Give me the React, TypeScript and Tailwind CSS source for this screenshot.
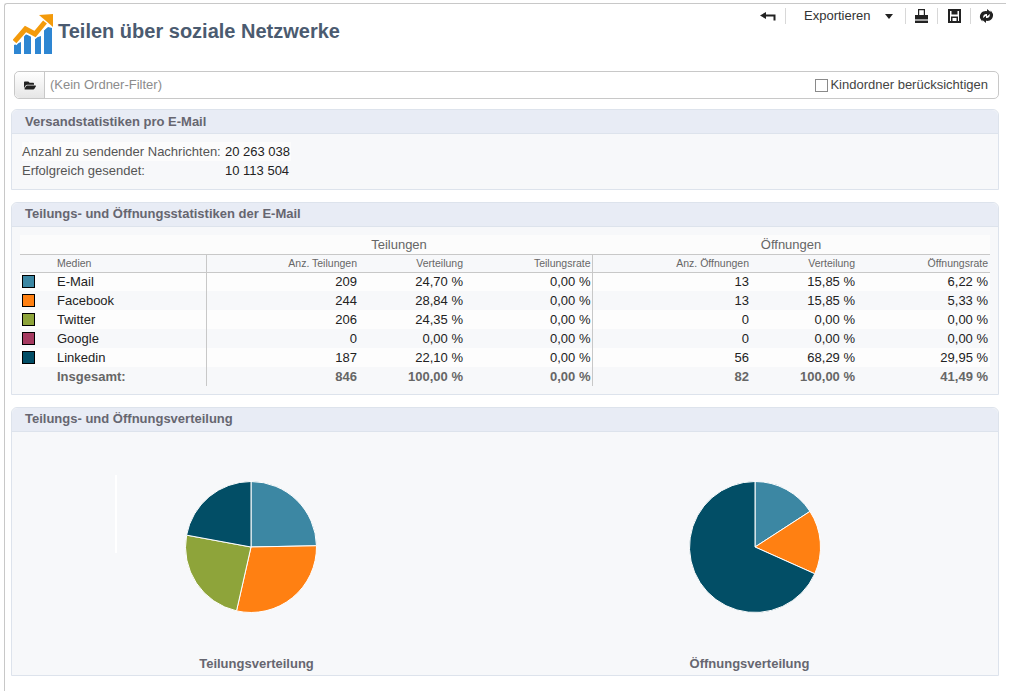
import React from 'react';
import { FaFolderOpen } from 'react-icons/fa';

const rows = [
  { name: 'E-Mail', color: 'bg-[#3c87a3]', v: ['209', '24,70 %', '0,00 %', '13', '15,85 %', '6,22 %'] },
  { name: 'Facebook', color: 'bg-[#ff8012]', v: ['244', '28,84 %', '0,00 %', '13', '15,85 %', '5,33 %'] },
  { name: 'Twitter', color: 'bg-[#8ea43a]', v: ['206', '24,35 %', '0,00 %', '0', '0,00 %', '0,00 %'] },
  { name: 'Google', color: 'bg-[#a53a60]', v: ['0', '0,00 %', '0,00 %', '0', '0,00 %', '0,00 %'] },
  { name: 'Linkedin', color: 'bg-[#024e66]', v: ['187', '22,10 %', '0,00 %', '56', '68,29 %', '29,95 %'] },
];
const total = ['846', '100,00 %', '0,00 %', '82', '100,00 %', '41,49 %'];
const heads = ['Anz. Teilungen', 'Verteilung', 'Teilungsrate', 'Anz. Öffnungen', 'Verteilung', 'Öffnungsrate'];

// cell padding per value column, the 3rd one carries the divider
const cellCls = ['pr-px', 'pr-px', 'pr-px border-r border-[#c8c8c8]', 'pr-px', 'pr-px', 'pr-[2px]'];

function Panel({ title, children, className, titleCls = '' }: { title: string; children: React.ReactNode; className: string; titleCls?: string }) {
  return (
    <section className={`ml-[6px] w-[988px] border border-[#dde3ec] rounded-t-[6px] bg-[#f7f8fa] ${className}`}>
      <h2 className={`h-[24px] pl-[13px] flex items-center bg-[#e8ecf5] border-b border-[#dde3ec] rounded-t-[6px] text-[13px] font-bold text-[#666670] ${titleCls}`}>
        {title}
      </h2>
      {children}
    </section>
  );
}

function Pie({ values }: { values: [number, string][] }) {
  const total = values.reduce((s, v) => s + v[0], 0);
  let a = 0;
  return (
    <svg width="134" height="134" viewBox="-67 -67 134 134">
      {values.map(([val, fill], i) => {
        const start = a;
        a += (val / total) * Math.PI * 2;
        const x1 = 65.5 * Math.sin(start);
        const y1 = -65.5 * Math.cos(start);
        const x2 = 65.5 * Math.sin(a);
        const y2 = -65.5 * Math.cos(a);
        const large = a - start > Math.PI ? 1 : 0;
        return (
          <path
            key={i}
            d={`M0 0L${x1} ${y1}A65.5 65.5 0 ${large} 1 ${x2} ${y2}Z`}
            fill={fill}
            stroke="#ffffff"
            strokeWidth="1"
          />
        );
      })}
    </svg>
  );
}

function Logo() {
  return (
    <svg width="40" height="41" viewBox="0 0 40 41" className="shrink-0">
      <path d="M1 40V31l7-3v12zM11 40V20l7 1v19zM22 40V24l6-2v18zM31 40V16l4-3 4 1v26z" fill="#2e86d2" />
      <path d="M1.500 29.500L12.500 17l9.500 5L34 10" fill="none" stroke="#ffffff" strokeWidth="5" />
      <path d="M1.500 27.500L12.500 15l9.500 5L32 8" fill="none" stroke="#f39a0b" strokeWidth="5" />
      <path d="M26 1L40 0V13z" fill="#f39a0b" />
    </svg>
  );
}

function BackIcon() {
  return (
    <svg width="16" height="9" viewBox="0 0 16 9">
      <path d="M0 3.500L6 0V2.500H15.500V8.500H13.500V4.500H6V7z" fill="#222" />
    </svg>
  );
}

function PrintIcon() {
  return (
    <svg width="13" height="14" viewBox="0 0 13 14">
      <path d="M3 0H10V6H8.800V1.200H4.200V6H3z" fill="#222" />
      <path d="M0 6H13V10.500H0z" fill="#222" />
      <path d="M0 10.500H13V11.800H0z" fill="#b0b0b0" />
      <path d="M0 11.800H13V14H0z" fill="#222" />
    </svg>
  );
}

function SaveIcon() {
  return (
    <svg width="13" height="14" viewBox="0 0 13 14">
      <path fillRule="evenodd" d="M0 0H13V14H0zM2 2V12H3V7.500H10V12H11V2H9.500V5.500H3.500V2zM4.500 9V12H8.500V9z" fill="#222" />
    </svg>
  );
}

function RefreshIcon() {
  return (
    <svg width="15" height="14" viewBox="0 0 15 14">
      <path d="M1 9C0.500 4.500 3.500 1.500 8 2.200L8 0 12.500 3.700 8 7.300V5C5.500 4.700 4 6 4.200 8.500L3.200 12.500z" fill="#222" />
      <path d="M14 5C14.500 9.500 11.500 12.500 7 11.800L7 14 2.500 10.300 7 6.700V9C9.500 9.300 11 8 10.800 5.500L11.800 1.500z" fill="#222" />
    </svg>
  );
}

export default function App() {
  return (
    <div className="w-[1011px] h-[691px] overflow-hidden bg-white pt-[3px] pl-[4px] font-['Liberation_Sans',Arial,sans-serif]">
      <div className="w-[1002px] h-[688px] border-l border-t border-[#c8c8c8] rounded-tl-[3px]">
        {/* Header */}
        <header className="relative h-[67px] flex items-start pt-[10px] pl-[8px]">
          <Logo />
          <h1 className="ml-[5px] mt-[5px] text-[20px] leading-[24px] font-bold text-[#4b5b70]">Teilen über soziale Netzwerke</h1>
          <div className="absolute top-[4px] right-[5px] flex items-center h-[16px]">
            <div className="w-[34px] flex items-center justify-end pr-[9px] border-r border-[#d8d8d8] h-[16px]"><BackIcon /></div>
            <div className="w-[120px] flex items-center border-r border-[#d8d8d8] h-[16px] pl-[18px] text-[13px] text-[#333]">
              Exportieren
              <span className="ml-[15px] w-0 h-0 border-x-[4.5px] border-x-transparent border-t-[5px] border-t-[#222]" />
            </div>
            <div className="w-[32px] flex justify-center border-r border-[#d8d8d8] h-[16px] items-center"><PrintIcon /></div>
            <div className="w-[33px] flex justify-center border-r border-[#d8d8d8] h-[16px] items-center"><SaveIcon /></div>
            <div className="w-[30px] flex justify-center items-center pl-px"><RefreshIcon /></div>
          </div>
        </header>

        {/* Ordner-Filter */}
        <div className="ml-[9px] w-[985px] h-[28px] flex items-center border border-[#c8c8c8] rounded-[5px] bg-white">
          <div className="w-[30px] h-full flex items-center justify-center border-r border-[#c8c8c8] rounded-l-[5px] bg-gradient-to-b from-white to-[#e6e6e6]">
            <FaFolderOpen className="w-[12px] h-[11px] text-[#222]" />
          </div>
          <span className="ml-[5px] text-[13px] text-[#8c8c8c]">(Kein Ordner-Filter)</span>
          <label className="ml-auto mr-[10px] flex items-center text-[13px] text-[#444]">
            <span className="w-[13px] h-[13px] mr-[2px] border border-[#8a8a8a] bg-white" />
            Kindordner berücksichtigen
          </label>
        </div>

        <Panel title="Versandstatistiken pro E-Mail" className="mt-[10px] h-[81px]">
          <div className="pt-[8px] pl-[10px] text-[13px] leading-[19px]">
            <div className="flex">
              <span className="w-[203px] text-[#555] bg-[#fcfcfc]">Anzahl zu sendender Nachrichten:</span>
              <span className="w-[66px] text-[#222] bg-[#fcfcfc]">20 263 038</span>
            </div>
            <div className="flex">
              <span className="w-[203px] text-[#555]">Erfolgreich gesendet:</span>
              <span className="text-[#222]">10 113 504</span>
            </div>
          </div>
        </Panel>

        <Panel title="Teilungs- und Öffnungsstatistiken der E-Mail" titleCls="pb-px" className="mt-[12px] h-[193px]">
          <div className="pt-[8px] pl-[8px]">
            <table className="w-[970px] table-fixed border-collapse text-[13px] leading-[15px]">
              <colgroup>
                <col className="w-[37px]" />
                <col className="w-[149px]" />
                <col className="w-[152px]" />
                <col className="w-[106px]" />
                <col className="w-[128px]" />
                <col className="w-[158px]" />
                <col className="w-[106px]" />
                <col className="w-[134px]" />
              </colgroup>
              <thead>
                <tr className="h-[19px] bg-[#fcfcfc] text-[#666] font-normal">
                  <th colSpan={2} />
                  <th colSpan={3} className="font-normal text-center">Teilungen</th>
                  <th colSpan={3} className="font-normal text-center">Öffnungen</th>
                </tr>
                <tr className="h-[18px] border-y border-[#c8c8c8] text-[10.5px] leading-[12px] text-[#666]">
                  <th />
                  <th className="font-normal text-left pb-px border-r border-[#c8c8c8]">Medien</th>
                  {heads.map((h, i) => (
                    <th key={i} className={`font-normal text-right pb-px ${cellCls[i]}`}>{h}</th>
                  ))}
                </tr>
              </thead>
              <tbody>
                {rows.map((r, idx) => (
                  <tr key={r.name} className={`h-[19px] text-[#222] ${idx % 2 === 0 ? 'bg-[#fdfdfd]' : 'bg-[#f7f8fa]'}`}>
                    <td className="pl-[2px]">
                      <span className={`block w-[13px] h-[13px] border border-black ${r.color}`} />
                    </td>
                    <td className="border-r border-[#c8c8c8]">{r.name}</td>
                    {r.v.map((v, i) => (
                      <td key={i} className={`text-right ${cellCls[i]}`}>{v}</td>
                    ))}
                  </tr>
                ))}
                <tr className="h-[19px] font-bold text-[#666] bg-[#f7f8fa]">
                  <td />
                  <td className="border-r border-[#c8c8c8]">Insgesamt:</td>
                  {total.map((v, i) => (
                    <td key={i} className={`text-right ${cellCls[i]}`}>{v}</td>
                  ))}
                </tr>
              </tbody>
            </table>
          </div>
        </Panel>

        <Panel title="Teilungs- und Öffnungsverteilung" titleCls="pb-px" className="mt-[12px] h-[269px]">
          <div className="relative flex pt-[48px]">
            <div className="absolute left-[103px] top-[43px] w-[2px] h-[78px] bg-white" />
            <div className="ml-[172px] w-[134px] flex flex-col items-center">
              <Pie values={[[24.7, '#3c87a3'], [28.84, '#ff8012'], [24.35, '#8ea43a'], [22.1, '#024e66']]} />
              <span className="mt-[40px] ml-[11px] text-[13px] font-bold text-[#666670] whitespace-nowrap">Teilungsverteilung</span>
            </div>
            <div className="ml-[370px] w-[134px] flex flex-col items-center">
              <Pie values={[[15.85, '#3c87a3'], [15.85, '#ff8012'], [68.29, '#024e66']]} />
              <span className="mt-[40px] mr-[11px] text-[13px] font-bold text-[#666670] whitespace-nowrap">Öffnungsverteilung</span>
            </div>
          </div>
        </Panel>
      </div>
    </div>
  );
}
